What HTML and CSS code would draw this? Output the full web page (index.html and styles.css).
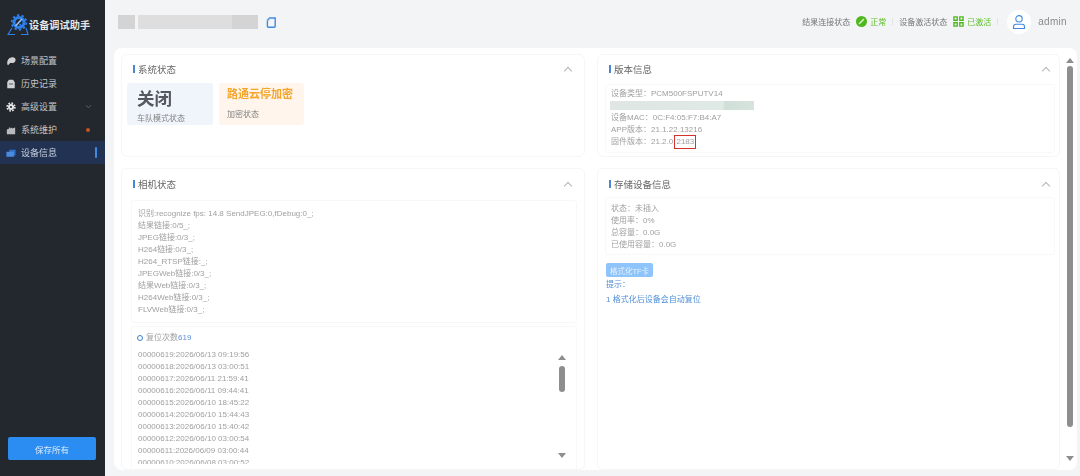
FILE: index.html
```html
<!DOCTYPE html>
<html lang="zh-CN">
<head>
  <meta charset="UTF-8">
  <title>设备调试助手</title>
  <link rel="stylesheet" href="styles.css">
</head>
<body>
  <div class="app">
    <!-- Sidebar -->
    <aside class="sidebar">
      <div class="brand">
        <svg class="brand-logo" viewBox="0 0 22 22" fill="none">
          <circle cx="12" cy="9.500" r="5" stroke="#2f80ea" stroke-width="3"/>
          <circle cx="12" cy="9.500" r="7.300" stroke="#2f80ea" stroke-width="1.800" stroke-dasharray="2.300 2.300"/>
          <path d="M9 12.500l5.500-6" stroke="#8fc2f8" stroke-width="1.700" stroke-linecap="round"/>
          <path d="M12.500 11l2.800 2.800" stroke="#2f80ea" stroke-width="1.700"/>
          <path d="M5 15L1 21.500h7M19 15l2 6.500h-7" stroke="#2f80ea" stroke-width="1.100"/>
        </svg>
        <span>设备调试助手</span>
      </div>
      <nav class="menu">
        <a class="menu-item">
          <svg class="menu-icon" viewBox="0 0 12 12"><path d="M1.500 8C1.500 4 4.500 1.500 8 1.500c2 0 3.500 1.200 3.500 3.200 0 2.200-2 3.800-4.300 3.800-.8 0-1.400-.1-2-.3L2.500 11 1.500 10z" fill="#cfd1d3"/></svg>
          <span>场景配置</span>
        </a>
        <a class="menu-item">
          <svg class="menu-icon" viewBox="0 0 12 12"><path d="M3.500 1h5l2 3v7h-9V4z" fill="#cfd1d3"/><path d="M3.500 6h5" stroke="#23282e" stroke-width=".8"/></svg>
          <span>历史记录</span>
        </a>
        <a class="menu-item">
          <svg class="menu-icon" viewBox="0 0 12 12"><circle cx="6" cy="6" r="4.600" fill="none" stroke="#e6e7e8" stroke-width="2" stroke-dasharray="2 1.600"/><circle cx="6" cy="6" r="3.600" fill="#e6e7e8"/><circle cx="6" cy="6" r="1.300" fill="#23282e"/></svg>
          <span>高级设置</span>
          <svg class="menu-arrow" viewBox="0 0 8 5"><path d="M1 1l3 3 3-3" fill="none" stroke="#77797d" stroke-width=".8"/></svg>
        </a>
        <a class="menu-item">
          <svg class="menu-icon" viewBox="0 0 12 12"><path d="M1 5.500l2.500-1V3H5v1.200L7.500 3v1.300L11 3v8H1z" fill="#b8babd"/></svg>
          <span>系统维护</span>
          <i class="menu-dot"></i>
        </a>
        <a class="menu-item active">
          <svg class="menu-icon" viewBox="0 0 12 12"><path d="M4 2h7.500v7H4z" fill="#2f6fc4"/><path d="M.5 4.500h9v6h-9z" fill="#4a8ce0"/></svg>
          <span>设备信息</span>
          <i class="menu-mark"></i>
        </a>
      </nav>
      <button class="save-btn">保存所有</button>
    </aside>

    <div class="main">
      <!-- Top bar -->
      <header class="topbar">
        <div class="device-name"><i></i><i></i><i></i></div>
        <svg class="copy-icon" viewBox="0 0 10 11" fill="none"><path d="M3.500 1h5.700v8.300c0 .6-.4.900-.9.900H2.300c-.6 0-.9-.4-.9-.9V3.200z" stroke="#3f8ae0" stroke-width="1.400"/><path d="M3.200 1.500v2.200H1.200" stroke="#a9cdf3" stroke-width=".8"/></svg>
        <div class="top-status">
          <span>结果连接状态</span>
          <svg class="status-icon" viewBox="0 0 12 12"><circle cx="6" cy="6" r="6" fill="#4fb81f"/><path d="M3.800 8.200l4.400-4.400" stroke="#d8f3c8" stroke-width="1.700" stroke-linecap="round"/></svg>
          <b>正常</b>
          <i class="top-sep"></i>
          <span>设备激活状态</span>
          <svg class="status-icon" viewBox="0 0 12 12" fill="none" stroke="#4fb81f" stroke-width="1.500"><path d="M1 1h3.600v3.600H1zM7.400 1H11v3.600H7.400zM1 7.400h3.600V11H1zM7.400 7.400H11V11H7.400z"/></svg>
          <b>已激活</b>
          <i class="top-sep"></i>
        </div>
        <div class="avatar">
          <svg viewBox="0 0 16 16" fill="none" stroke="#3f8ae0" stroke-width="1.100"><circle cx="8" cy="4.800" r="3.200"/><path d="M2.500 14.500v-1.800c0-1.500 1-2.500 2.500-2.500h6c1.500 0 2.500 1 2.500 2.500v1.800z"/></svg>
        </div>
        <span class="username">admin</span>
      </header>

      <!-- Content -->
      <main class="panel">
        <div class="cards">
          <section class="card">
            <h3 class="card-title">系统状态<i class="chevron"></i></h3>
            <div class="tiles">
              <div class="tile tile-blue">
                <strong>关闭</strong>
                <span>车队模式状态</span>
              </div>
              <div class="tile tile-orange">
                <strong>路通云停加密</strong>
                <span>加密状态</span>
              </div>
            </div>
          </section>

          <section class="card card-right">
            <h3 class="card-title">版本信息<i class="chevron"></i></h3>
            <div class="info-box version-box">
              <p>设备类型：PCM500FSPUTV14</p>
              <p class="redacted-row"><i></i></p>
              <p>设备MAC：0C:F4:05:F7:B4:A7</p>
              <p>APP版本：21.1.22.13216</p>
              <p>固件版本：21.2.0.<span class="mark-red">2183</span></p>
            </div>
          </section>

          <section class="card card-lower">
            <h3 class="card-title">相机状态<i class="chevron"></i></h3>
            <div class="info-box log-box">
              <p>识别:recognize fps: 14.8 SendJPEG:0,fDebug:0_;</p>
              <p>结果链接:0/5_;</p>
              <p>JPEG链接:0/3_;</p>
              <p>H264链接:0/3_;</p>
              <p>H264_RTSP链接:_;</p>
              <p>JPEGWeb链接:0/3_;</p>
              <p>结果Web链接:0/3_;</p>
              <p>H264Web链接:0/3_;</p>
              <p>FLVWeb链接:0/3_;</p>
            </div>
            <div class="info-box reset-box">
              <div class="reset-head"><i class="ring"></i>复位次数<em>619</em></div>
              <div class="reset-body">
                <div class="reset-list">
                  <p>00000619:2026/06/13 09:19:56</p>
                  <p>00000618:2026/06/13 03:00:51</p>
                  <p>00000617:2026/06/11 21:59:41</p>
                  <p>00000616:2026/06/11 09:44:41</p>
                  <p>00000615:2026/06/10 18:45:22</p>
                  <p>00000614:2026/06/10 15:44:43</p>
                  <p>00000613:2026/06/10 15:40:42</p>
                  <p>00000612:2026/06/10 03:00:54</p>
                  <p>00000611:2026/06/09 03:00:44</p>
                  <p>00000610:2026/06/08 03:00:52</p>
                </div>
                <div class="scrollbar scrollbar-inner">
                  <i class="arrow-up"></i>
                  <div class="track"><i class="thumb"></i></div>
                  <i class="arrow-down"></i>
                </div>
              </div>
            </div>
          </section>

          <section class="card card-right card-lower">
            <h3 class="card-title">存储设备信息<i class="chevron"></i></h3>
            <div class="info-box storage-box">
              <p>状态：未插入</p>
              <p>使用率：0%</p>
              <p>总容量：0.0G</p>
              <p>已使用容量：0.0G</p>
            </div>
            <button class="format-btn">格式化TF卡</button>
            <p class="hint">提示：</p>
            <p class="hint hint-line">1 格式化后设备会自动复位</p>
          </section>
        </div>
        <div class="scrollbar scrollbar-outer">
          <i class="arrow-up"></i>
          <div class="track"><i class="thumb"></i></div>
          <i class="arrow-down"></i>
        </div>
      </main>
    </div>
  </div>
</body>
</html>
```

FILE: styles.css
```css
/* Base */
* {
  margin: 0;
  padding: 0;
  box-sizing: border-box;
}

body {
  width: 1080px;
  height: 476px;
  overflow: hidden;
  font-family: "Liberation Sans", "Noto Sans CJK SC", sans-serif;
  font-size: 8px;
  color: #a0a0a0;
  background-color: #f3f4f5;
}

i {
  display: block;
  font-style: normal;
}

/* the source picture is a soft, downscaled capture */
.app {
  display: flex;
  height: 476px;
  filter: blur(.3px);
}

/* Sidebar */
.sidebar {
  width: 105px;
  flex-shrink: 0;
  display: flex;
  flex-direction: column;
  background-color: #23282e;
}

.brand {
  height: 48px;
  display: flex;
  align-items: center;
  padding-left: 7px;
  color: #e6e7e8;
  font-size: 10.2px;
  font-weight: 700;
}

.brand-logo {
  width: 22px;
  height: 22px;
}

.menu {
  margin-top: 1px;
  display: flex;
  flex-direction: column;
}

.menu-item {
  height: 23px;
  display: flex;
  align-items: center;
  gap: 5px;
  padding-left: 6px;
  padding-right: 9px;
  color: #c3c5c8;
  font-size: 9px;
}

.menu-item.active {
  background-color: #223253;
  color: #c9d2e0;
}

.menu-icon {
  width: 10px;
  height: 10px;
}

.menu-arrow {
  width: 7px;
  height: 5px;
  margin-left: auto;
  margin-right: 4px;
}

.menu-dot {
  width: 4px;
  height: 4px;
  margin-left: auto;
  margin-right: 6px;
  border-radius: 50%;
  background-color: #c9521f;
}

.menu-mark {
  width: 2px;
  height: 11px;
  margin-left: auto;
  margin-right: -1px;
  border-radius: 1px;
  background-color: #3f8ae0;
}

.save-btn {
  width: 88px;
  height: 23px;
  margin: auto 0 16px 8px;
  border: none;
  border-radius: 2px;
  background-color: #2b8cf2;
  color: #dcebfb;
  font-family: inherit;
  font-size: 8.5px;
}

/* Top bar */
.main {
  flex: 1;
  min-width: 0;
  display: flex;
  flex-direction: column;
}

.topbar {
  height: 43px;
  display: flex;
  align-items: center;
  padding: 0 13px;
  color: #777;
}

.device-name {
  width: 140px;
  height: 14px;
  display: flex;
  gap: 3px;
  filter: blur(.6px);
}

.device-name i {
  background-color: #d4d4d4;
}

.device-name i:nth-child(1) {
  width: 17px;
}

.device-name i:nth-child(2) {
  flex: 1;
  background-color: #dedede;
}

.device-name i:nth-child(3) {
  width: 26px;
  margin-left: -3px;
}

.copy-icon {
  width: 10px;
  height: 11px;
  margin: 1px 0 0 8px;
}

.top-status {
  margin-left: auto;
  display: flex;
  align-items: center;
  font-size: 8px;
}

.top-status b {
  margin-left: 3px;
  font-weight: 400;
  color: #5cbf2a;
}

.status-icon {
  width: 11px;
  height: 11px;
  margin-left: 6px;
}

.top-sep {
  width: 1px;
  height: 7px;
  margin: 0 6px;
  background-color: #e2e3e4;
}

.avatar {
  width: 24px;
  height: 24px;
  margin-left: 3px;
  padding: 4px;
  border-radius: 50%;
  background-color: #fff;
}

.avatar svg {
  display: block;
}

.username {
  margin-left: 7px;
  font-size: 10px;
  letter-spacing: .3px;
  color: #8a8a8a;
}

/* Content panel */
.panel {
  height: 422px;
  margin: 5px 3px 0 9px;
  padding: 6px 4px 0 7px;
  display: flex;
  gap: 7px;
  border-radius: 8px;
  background-color: #fff;
}

.cards {
  flex: 1;
  min-width: 0;
  display: grid;
  grid-template-columns: 464px 463px;
  grid-template-rows: 103px 302px;
  gap: 11px 12px;
}

.card {
  position: relative;
  padding: 0 6px;
  border: 1px solid #f6f6f6;
  border-radius: 6px;
  overflow: hidden;
}

.card-title {
  height: 28px;
  display: flex;
  align-items: center;
  padding-left: 5px;
  font-size: 9.5px;
  font-weight: 400;
  color: #666;
}

.card-lower .card-title {
  height: 30px;
}

.card-title::before {
  content: "";
  width: 2px;
  height: 8px;
  margin-right: 3px;
  background-color: #4a86d8;
}

.chevron {
  width: 6px;
  height: 6px;
  margin-left: auto;
  margin-right: 7px;
  margin-top: 3px;
  border-top: 1px solid #b5b5b5;
  border-left: 1px solid #b5b5b5;
  transform: rotate(45deg);
}

.card-right .chevron {
  margin-right: 4px;
}

.tiles {
  display: flex;
  gap: 6px;
  margin-left: -1px;
}

.tile {
  width: 86px;
  height: 42px;
  display: flex;
  flex-direction: column;
  padding-left: 10px;
  border-radius: 3px;
}

.tile-blue {
  background-color: #f0f5fc;
}

.tile-orange {
  width: 85px;
  padding-left: 8px;
  background-color: #fff5ec;
}

.tile strong {
  font-size: 17.5px;
  line-height: 23px;
  margin-top: 5px;
  margin-bottom: 3px;
  color: #55585c;
}

.tile-orange strong {
  font-size: 11px;
  line-height: 13px;
  margin-top: 5px;
  margin-bottom: 9px;
  color: #f4a52a;
}

.tile span {
  font-size: 8px;
  line-height: 10px;
  color: #808080;
}

.info-box {
  border: 1px solid #f8f8f8;
  border-radius: 3px;
  padding-left: 5px;
  line-height: 12px;
}

.version-box {
  height: 69px;
  margin: 1px -2px 0 1px;
  padding-top: 3px;
}

.redacted-row {
  height: 12px;
  padding-top: 1px;
}

.redacted-row i {
  width: 144px;
  height: 9px;
  margin-left: -1px;
  background: linear-gradient(90deg, #dfe6e3 0%, #dfe9e5 78%, #cfdfd8 80%, #d6e4dd 100%);
  filter: blur(.5px);
}

.mark-red {
  display: inline-block;
  height: 14px;
  line-height: 12px;
  margin: -1px 0 -1px -1px;
  padding: 0 1px;
  border: 1px solid #d5322c;
}

/* Camera card */
.log-box {
  height: 123px;
  margin: 1px 1px 0 3px;
  padding-top: 7px;
  padding-left: 6px;
}

.reset-box {
  height: 150px;
  margin: 3px 1px 0 3px;
  padding-top: 5px;
  padding-left: 5px;
}

.reset-head {
  display: flex;
  align-items: center;
}

.ring {
  width: 6px;
  height: 6px;
  margin-right: 3px;
  border: 1.500px solid #3f7fcf;
  border-radius: 50%;
}

.reset-head em {
  font-style: normal;
  color: #5a8fd6;
}

.reset-body {
  height: 115px;
  margin-top: 5px;
  padding-left: 1px;
  display: flex;
  justify-content: space-between;
  overflow: hidden;
}

.reset-list {
  flex: 1;
}

/* Scrollbars */
.scrollbar {
  width: 6px;
  display: flex;
  flex-direction: column;
  align-items: center;
}

.scrollbar-outer {
  height: 403px;
  margin-top: 4px;
  flex-shrink: 0;
}

.scrollbar-inner {
  height: 103px;
  margin: 6px 11px 0 0;
}

.track {
  flex: 1;
  width: 100%;
  padding: 3px 0;
}

.scrollbar-inner .track {
  padding-top: 6px;
}

.scrollbar-outer .thumb {
  height: 361px;
}

.scrollbar-inner .thumb {
  height: 26px;
}

.thumb {
  width: 100%;
  border-radius: 3px;
  background-color: #8e8e8e;
}

.arrow-up,
.arrow-down {
  width: 0;
  height: 0;
  flex-shrink: 0;
  border-left: 4px solid transparent;
  border-right: 4px solid transparent;
}

.arrow-up {
  border-bottom: 5px solid #8e8e8e;
}

.arrow-down {
  border-top: 5px solid #8e8e8e;
}

/* Storage card */
.storage-box {
  height: 58px;
  margin: -2px -2px 0 1px;
  padding-top: 5px;
}

.format-btn {
  display: block;
  width: 47px;
  height: 14px;
  margin: 8px 0 0 2px;
  border: none;
  border-radius: 2px;
  background-color: #8fc4fb;
  color: #e6f2ff;
  font-family: inherit;
  font-size: 7.5px;
}

.hint {
  margin: 2px 0 0 2px;
  line-height: 12px;
  color: #4f8fd8;
}

.hint-line {
  margin-top: 3px;
}
```
